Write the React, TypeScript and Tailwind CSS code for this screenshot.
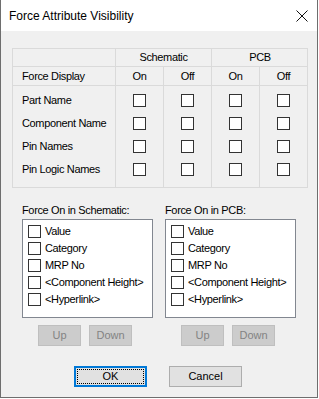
import React from "react";

const font = { fontFamily: '"Liberation Sans", Arial, sans-serif' };

function Box() {
  return <div className="w-[13px] h-[13px] border border-[#333333] bg-white shrink-0" />;
}

const rows = ["Part Name", "Component Name", "Pin Names", "Pin Logic Names"];
const items = ["Value", "Category", "MRP No", "<Component Height>", "<Hyperlink>"];

function ListBox({ title }: { title: string }) {
  return (
    <div className="flex flex-col w-[131px]">
      <div className="h-[15px] leading-[13px] text-[11px] tracking-[-0.35px] text-black">{title}</div>
      <div className="h-[99px] border border-[#828790] bg-white pt-[3px] pl-[5px]">
        {items.map((it) => (
          <div key={it} className="h-[17px] flex items-center gap-[4px]">
            <Box />
            <span className="text-[11px] tracking-[-0.35px] text-black leading-[13px]">{it}</span>
          </div>
        ))}
      </div>
      <div className="flex gap-[8px] mt-[7px] pl-[16px]">
        <div className="w-[43px] h-[21px] bg-[#cccccc] border border-[#bfbfbf] flex items-center justify-center text-[11px] text-[#838383]">Up</div>
        <div className="w-[43px] h-[21px] bg-[#cccccc] border border-[#bfbfbf] flex items-center justify-center text-[11px] text-[#838383]">Down</div>
      </div>
    </div>
  );
}

export default function App() {
  const line = "border-[#dadada]";
  return (
    <div style={font} className="w-[318px] h-[398px] bg-[#f0f0f0] border-l border-r border-b border-[#6e6e6e] flex flex-col">
      <div className="h-[31px] bg-white flex items-center justify-between pl-[8px] pr-[7px] shrink-0">
        <span className="text-[12px] text-black">Force Attribute Visibility</span>
        <svg width="14" height="14" viewBox="0 0 14 14" className="mr-[1px]">
          <path d="M1.5 1.5 L12.5 12.5 M12.5 1.5 L1.5 12.5" stroke="#111" strokeWidth="1" fill="none" />
        </svg>
      </div>
      <div className="pl-[11px] pt-[17px]">
        <div className={`w-[296px] border ${line} text-[11px] tracking-[-0.35px] text-black`}>
          <div className={`grid grid-cols-[103px_96px_96px] h-[18px] border-b ${line}`}>
            <div className={`border-r ${line}`} />
            <div className={`border-r ${line} flex items-center justify-center`}>Schematic</div>
            <div className="flex items-center justify-center">PCB</div>
          </div>
          <div className={`grid grid-cols-[103px_48px_48px_48px_47px] h-[19px] border-b ${line}`}>
            <div className={`border-r ${line} flex items-center pl-[9px]`}>Force Display</div>
            <div className={`border-r ${line} flex items-center justify-center`}>On</div>
            <div className={`border-r ${line} flex items-center justify-center`}>Off</div>
            <div className={`border-r ${line} flex items-center justify-center`}>On</div>
            <div className="flex items-center justify-center">Off</div>
          </div>
          <div className="grid grid-cols-[103px_48px_48px_48px_47px] h-[101px]">
            <div className={`border-r ${line} pt-[3px]`}>
              {rows.map((r) => (
                <div key={r} className="h-[23px] flex items-center pl-[9px]">{r}</div>
              ))}
            </div>
            {[0, 1, 2, 3].map((c) => (
              <div key={c} className={`${c < 3 ? `border-r ${line}` : ""} pt-[3px]`}>
                {rows.map((r) => (
                  <div key={r} className="h-[23px] flex items-center justify-center">
                    <Box />
                  </div>
                ))}
              </div>
            ))}
          </div>
        </div>
      </div>
      <div className="flex gap-[12px] pl-[21px] mt-[16px]">
        <ListBox title="Force On in Schematic:" />
        <ListBox title="Force On in PCB:" />
      </div>
      <div className="flex gap-[22px] pl-[73px] mt-[20px]">
        <div className="w-[73px] h-[21px] border-2 border-[#0078d7] bg-[#e1e1e1] p-[1px]">
          <div className="w-full h-full border border-dotted border-black flex items-center justify-center text-[11px] text-black">OK</div>
        </div>
        <div className="w-[73px] h-[21px] border border-[#adadad] bg-[#e1e1e1] flex items-center justify-center text-[11px] text-black">Cancel</div>
      </div>
    </div>
  );
}
